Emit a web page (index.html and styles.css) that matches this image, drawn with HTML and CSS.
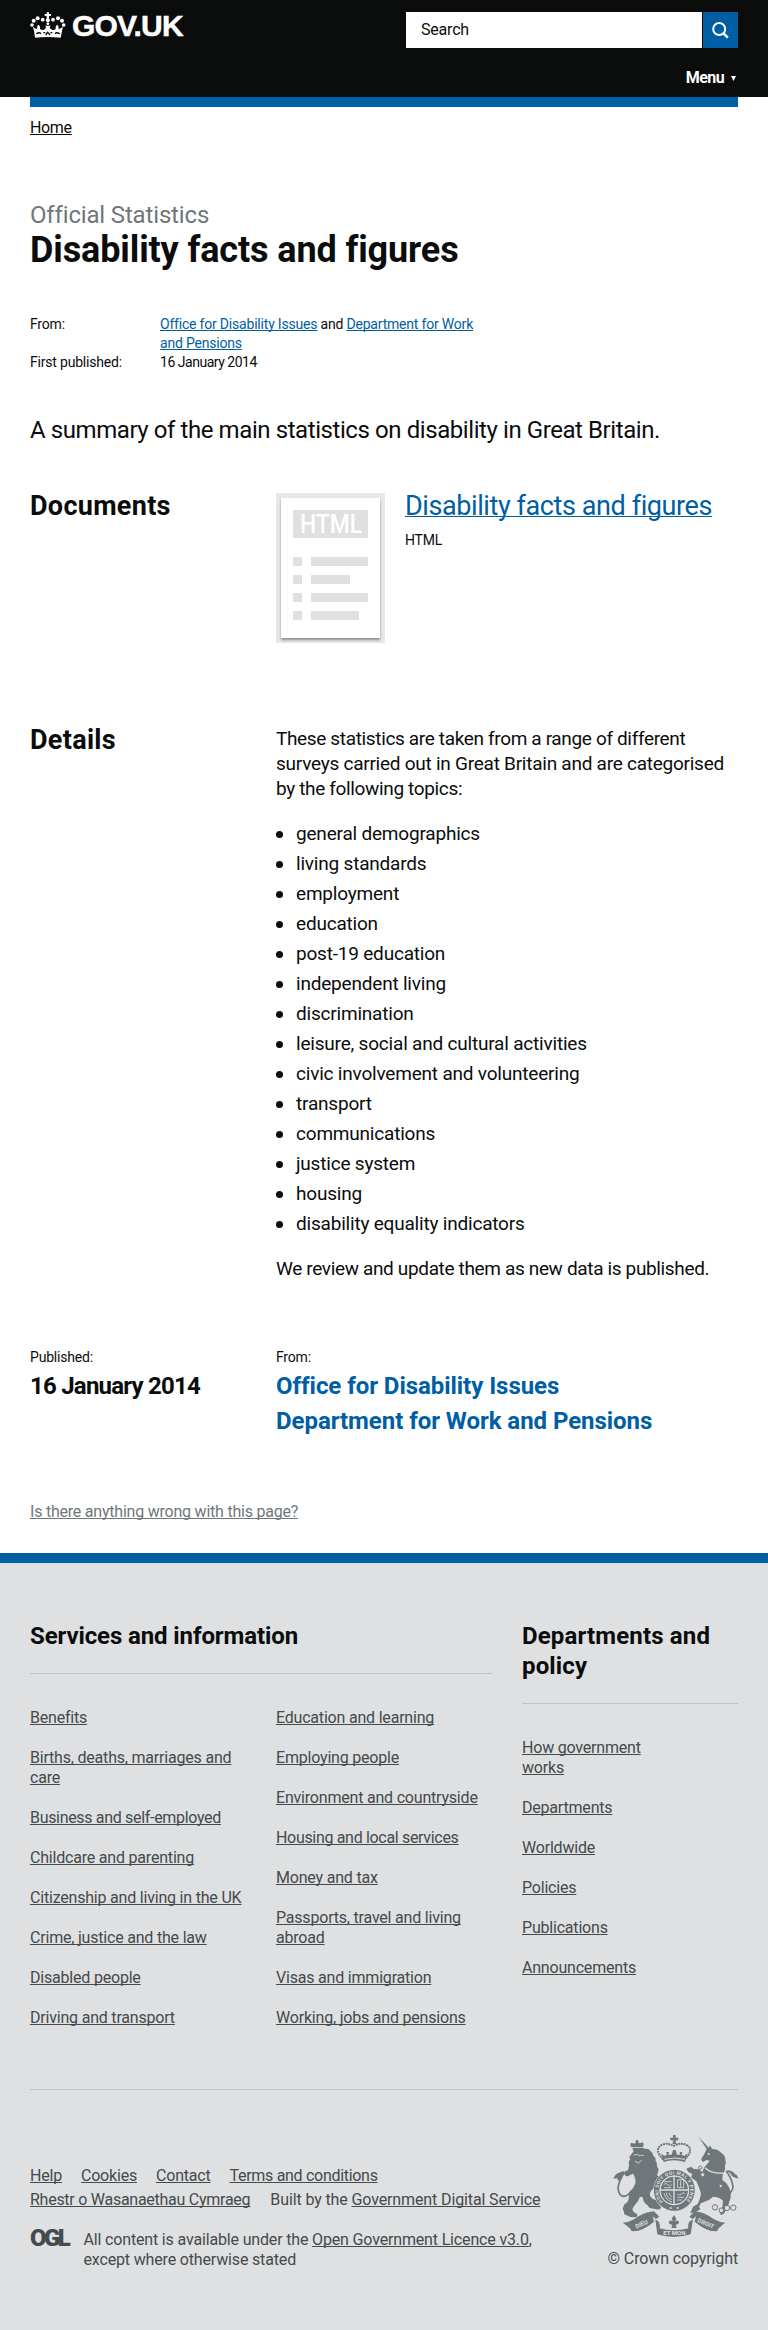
FILE: index.html
```html
<!DOCTYPE html>
<html lang="en">
<head>
<meta charset="utf-8">
<title>Disability facts and figures - GOV.UK</title>
<link rel="stylesheet" href="styles.css">
</head>
<body>
<header class="header">
  <a class="logo" href="#">
    <svg class="crown" viewBox="15 18 108 81" aria-hidden="true">
      <path fill="#fff" d="M27 77 L23 64 Q28 73 37 71 Q34 63 41 59 Q47 64 45 72 Q54 78 60 71 Q66 68 60 62 L77 62 Q71 68 77 71 Q85 78 92 72 Q90 64 96 59 Q103 63 100 71 Q109 73 114 64 L107 98 Q68 94 30 98Z"/>
      <path fill="#fff" d="M65 41h7v-8h6v-6h-6v-5h-7v5h-6v6h6z"/>
      <g fill="#fff"><circle cx="68.500" cy="46" r="6"/><circle cx="53" cy="44" r="5.500"/><circle cx="84" cy="44" r="5.500"/><circle cx="38" cy="40" r="6"/><circle cx="99" cy="40" r="6"/><circle cx="26" cy="47" r="6"/><circle cx="111" cy="47" r="6"/><circle cx="21" cy="60" r="5.500"/><circle cx="116" cy="60" r="5.500"/><circle cx="68.500" cy="56" r="4"/></g>
      <path fill="none" stroke="#0b0c0c" stroke-width="4" d="M34 87q8-7 14-1M90 86q6-6 14 1M55 83h6M76 83h6M62 90l6-8 7 8"/>
    </svg>
    <span class="logo-text">GOV.UK</span>
  </a>
  <div class="header-tools">
    <form class="search">
      <div class="search-box">Search</div>
      <div class="search-button">
        <svg viewBox="0 0 17 17" width="17" height="17" aria-hidden="true"><circle cx="7.200" cy="7" r="6" fill="none" stroke="#fff" stroke-width="2"/><path d="M11.500 11.300l4.300 4.300" stroke="#fff" stroke-width="2.600"/></svg>
      </div>
    </form>
    <a class="menu" href="#">Menu<svg viewBox="0 0 5 5" width="5" height="5" aria-hidden="true"><path fill="#fff" d="M0 0h5L2.500 5z"/></svg></a>
  </div>
</header>
<main class="page">
  <div class="brand-bar"></div>
  <nav class="breadcrumb"><a href="#">Home</a></nav>
  <div class="title">
    <p class="title-context">Official Statistics</p>
    <h1>Disability facts and figures</h1>
  </div>
  <dl class="meta">
    <dt>From:</dt>
    <dd><a href="#">Office for Disability Issues</a> and <a href="#">Department for Work<br>and Pensions</a></dd>
    <dt>First published:</dt>
    <dd class="date">16 January 2014</dd>
  </dl>
  <p class="summary">A summary of the main statistics on disability in Great Britain.</p>
  <section class="row documents">
    <h2>Documents</h2>
    <div class="attachment">
      <svg class="thumb" viewBox="0 0 109 150" width="109" height="150" aria-hidden="true">
        <path fill="#e7e7e7" d="M0 0h109v150H0z"/>
        <g class="sheet"><path fill="#fff" d="M5 5h99v140H5z"/></g>
        <path fill="#dee0e2" d="M17 17h75v28H17zM17 64h9v9h-9zM17 82h9v9h-9zM17 100h9v9h-9zM17 118h9v9h-9zM35 64h57v9H35zM35 82h39v9H35zM35 100h57v9H35zM35 118h48v9H35z"/>
        <text class="thumb-text" x="24" y="40" textLength="62" lengthAdjust="spacingAndGlyphs">HTML</text>
      </svg>
      <div>
        <a class="attachment-title" href="#">Disability facts and figures</a>
        <p class="attachment-type">HTML</p>
      </div>
    </div>
  </section>
  <section class="row details">
    <h2>Details</h2>
    <div class="prose">
      <p class="intro">These statistics are taken from a range of different<br><span class="wide">surveys carried out in Great Britain and are categorised</span><br>by the following topics:</p>
      <ul>
        <li>general demographics</li>
        <li>living standards</li>
        <li>employment</li>
        <li>education</li>
        <li>post-19 education</li>
        <li>independent living</li>
        <li>discrimination</li>
        <li>leisure, social and cultural activities</li>
        <li>civic involvement and volunteering</li>
        <li>transport</li>
        <li>communications</li>
        <li>justice system</li>
        <li>housing</li>
        <li>disability equality indicators</li>
      </ul>
      <p>We review and update them as new data is published.</p>
    </div>
  </section>
  <section class="row published">
    <div>
      <p class="label">Published:</p>
      <p class="value value-date">16 January 2014</p>
    </div>
    <div>
      <p class="label">From:</p>
      <p class="value"><a href="#">Office for Disability Issues</a></p>
      <p class="value"><a href="#">Department for Work and Pensions</a></p>
    </div>
  </section>
  <p class="report"><a href="#">Is there anything wrong with this page?</a></p>
</main>
<footer class="footer">
  <div class="footer-nav">
    <section class="services">
      <h2>Services and information</h2>
      <div class="columns">
        <ul>
          <li><a href="#">Benefits</a></li>
          <li><a href="#">Births, deaths, marriages and<br>care</a></li>
          <li class="tight"><a href="#">Business and self-employed</a></li>
          <li><a href="#">Childcare and parenting</a></li>
          <li><a href="#">Citizenship and living in the UK</a></li>
          <li><a href="#">Crime, justice and the law</a></li>
          <li><a href="#">Disabled people</a></li>
          <li><a href="#">Driving and transport</a></li>
        </ul>
        <ul>
          <li><a href="#">Education and learning</a></li>
          <li><a href="#">Employing people</a></li>
          <li><a href="#">Environment and countryside</a></li>
          <li class="tight"><a href="#">Housing and local services</a></li>
          <li><a href="#">Money and tax</a></li>
          <li><a href="#">Passports, travel and living<br>abroad</a></li>
          <li><a href="#">Visas and immigration</a></li>
          <li><a href="#">Working, jobs and pensions</a></li>
        </ul>
      </div>
    </section>
    <section class="policy">
      <h2>Departments and<br>policy</h2>
      <ul>
        <li><a href="#">How government<br>works</a></li>
        <li><a href="#">Departments</a></li>
        <li><a href="#">Worldwide</a></li>
        <li><a href="#">Policies</a></li>
        <li><a href="#">Publications</a></li>
        <li><a href="#">Announcements</a></li>
      </ul>
    </section>
  </div>
  <div class="footer-meta">
    <div class="footer-left">
      <div class="support"><a href="#">Help</a><a href="#">Cookies</a><a href="#">Contact</a><a class="terms" href="#">Terms and conditions</a></div>
      <div class="support support-second"><a href="#">Rhestr o Wasanaethau Cymraeg</a><span class="built">Built by the <a href="#">Government Digital Service</a></span></div>
      <div class="licence">
        <span class="ogl">OGL</span>
        <p>All content is available under the <a href="#">Open Government Licence v3.0</a>,<br>except where otherwise stated</p>
      </div>
    </div>
    <div class="copyright">
      <svg class="crest" viewBox="24 15 375 306" width="125" height="102" aria-hidden="true">
        <defs><path id="garter" d="M174 215 A48 48 0 1 1 242 215"/></defs>
        <!-- lion -->
        <g fill="#6f777b">
          <path transform="translate(6 0)" d="M80 64l-4-8 4-2h30l4 3q12-2 16 6 8 4 8 13 8 6 8 16 6 8 4 16 6 8 4 16l-4 12 10 6q-10 4-12 12 2 16-10 22-10 8-10 16 2 12 12 16 12 2 18 12l4 14q-4 6-14 4l-20-4q-6-10-12-12-8-10-10-22l-8 2q-4 14-12 20-8 10-10 16l4 8 10 6q4 8-4 10l-16-1-18-8q0-10-5-16l5-14q10-4 13-16l2-20q10-8 18-26 2-12-2-20l-4-10-10 4q-8 6-14 2l-4-8q4-8 12-8 4-14 3-18-3-10 4-14l-3-8z"/>
          <path d="M80 52q-8-10 0-14l8 3q6-3 8-9 3 6 9 8l8-3q6 5 0 15z"/>
          <circle cx="96" cy="34" r="4"/>
          <path d="M25 146q6-16 22-20 14-6 13 2-4 6-10 8 4 12-5 16-10 0-8-8-8 2-12 2z"/>
        </g>
        <path fill="none" stroke="#6f777b" stroke-width="5" d="M57 129q-16 24-18 46 3 24 18 24 14-2 23-18"/>
        <path fill="none" stroke="#dee0e2" stroke-width="2.500" d="M86 76l11-3 8 5M106 76l10 0M90 94l10 5 10-8"/>
        <!-- unicorn -->
        <g fill="#6f777b">
          <path d="M281 21L311 53L315 46L321 57Q340 58 348 68Q360 74 361 88Q364 98 360 108Q362 124 354 130Q351 144 352 150Q366 158 372 172Q380 188 376 206L370 224L358 250L348 256L344 246L352 232L354 212Q342 200 324 200Q314 210 302 214L288 220L282 230L286 238L272 246L256 250L264 230L278 222L284 208L288 192L284 178Q280 166 274 154L258 142L262 132L250 126L244 116L258 110L266 117L282 118L292 126L298 112Q306 104 314 92L304 90L296 95Q288 94 289 86L298 72L305 57Z"/>
          <path d="M396 144q-16-2-18-12-6-6-14-8 2-6 12-2 10 2 14 10 10 4 9 16z"/>
        </g>
        <path fill="none" stroke="#6f777b" stroke-width="5" d="M364 123q18 26 20 48-2 22-26 20"/>
        <path fill="none" stroke="#dee0e2" stroke-width="4" d="M300 113q18 18 54 16"/>
        <circle cx="311" cy="72" r="3" fill="#dee0e2"/>
        <g fill="#dee0e2" stroke="#6f777b" stroke-width="3"><circle cx="293" cy="134" r="6"/><circle cx="286" cy="113" r="5"/><circle cx="347" cy="168" r="5"/><circle cx="330" cy="232" r="8"/><circle cx="349" cy="241" r="7"/><circle cx="366" cy="234" r="8"/><circle cx="385" cy="233" r="8"/></g>
        <!-- crown -->
        <path fill="none" stroke="#6f777b" stroke-width="6" stroke-dasharray="6 2" d="M174 88q-27-28-6-42 18-10 38 2 20-12 40-2 22 14-7 42"/>
        <path fill="#6f777b" d="M168 70l10 8 8-4-2-8h8l-2 8 10 0 4-14h8l4 14 10 0-2-8h8l-2 8 8 4 10-8-8 26q-36-10-64 0zM202 42l4-10-10-2v-7h8v-9h8v9h8v7l-9 2 3 10z"/>
        <path fill="none" stroke="#dee0e2" stroke-width="3" d="M178 88q32-8 62 0"/>
        <!-- garter and shield -->
        <circle cx="208" cy="181" r="63" fill="#dee0e2"/>
        <circle cx="208" cy="181" r="53" fill="none" stroke="#6f777b" stroke-width="17"/>
        <circle cx="208" cy="181" r="42" fill="#6f777b"/>
        <text class="garter-text"><textPath href="#garter">HONI SOIT QUI MAL Y PENSE</textPath></text>
        <circle cx="208" cy="181" r="43" fill="none" stroke="#dee0e2" stroke-width="3"/>
        <path fill="none" stroke="#dee0e2" stroke-width="4" d="M207 138v86M165 180h86"/>
        <path fill="none" stroke="#dee0e2" stroke-width="2.500" d="M177 155h23M176 164q6-7 12 0t12 0M177 173h22M218 173v-24h18v24zM227 151v20M177 190q6 22 24 26M184 188q2 18 17 20M192 188q2 10 9 12M217 192q6 7 12 0t12 0M217 202h20M217 210h14"/>
        <circle cx="197" cy="234" r="3" fill="#dee0e2"/><circle cx="218" cy="234" r="3" fill="#dee0e2"/>
        <!-- fleur and motto ribbons -->
        <path fill="#6f777b" d="M207 255l7 11-4 9q9-8 12 1-1 8-10 8l3 10h-16l3-10q-10 0-11-8 4-9 13-1l-4-9z"/>
        <path fill="#6f777b" d="M53 278q18 0 34-10 30-22 60-24l16 16-10 7-10-8 4 16q-38 32-68 28 0-8-26-25zM361 278q-16 0-34-10-30-22-58-24l-16 16 10 7 10-8-4 16q38 32 68 28 0-8 24-25z"/>
        <path fill="#6f777b" d="M151 268l11 8q5 17 1 19 44 12 88 0-4-4 1-19l12-8-7 45q-52 16-100 0z"/>
        <g class="motto"><text x="112" y="288" transform="rotate(-24 112 288)">DIEU</text><text x="208" y="316">ET MON</text><text x="300" y="286" transform="rotate(24 300 286)">DROIT</text></g>
      </svg>
      <a href="#">© Crown copyright</a>
    </div>
  </div>
</footer>
</body>
</html>
```
FILE: styles.css
```css
* { box-sizing: border-box; }
body { margin: 0; background: #fff; color: #0b0c0c; font: 16px/20px Roboto, "Liberation Sans", sans-serif; letter-spacing: -0.2px; }
h1, h2, p, ul, dl, dd { margin: 0; padding: 0; }
ul { list-style: none; }
a { color: #005ea5; text-decoration: underline; text-decoration-thickness: 1px; text-underline-offset: 1px; text-decoration-skip-ink: none; }

.header { display: flex; justify-content: space-between; height: 97px; padding: 11px 30px 0; background: #0b0c0c; }
.logo { display: flex; align-items: flex-start; gap: 6px; height: 30px; color: #fff; text-decoration: none; }
.crown { width: 36px; height: 27px; }
.logo-text { font: bold 30px/30px "Liberation Sans", sans-serif; letter-spacing: -0.8px; -webkit-text-stroke: 0.5px #fff; }
.header-tools { display: flex; flex-direction: column; align-items: flex-end; width: 332px; padding-top: 1px; }
.search { display: flex; gap: 1px; width: 100%; height: 36px; }
.search-box { flex: 1; padding: 8px 15px; background: #fff; }
.search-button { display: flex; align-items: center; justify-content: center; width: 35px; background: #005ea5; }
.menu { display: flex; align-items: center; gap: 7px; margin-top: 20px; padding-right: 2px; color: #fff; font-weight: 700; letter-spacing: -0.6px; text-decoration: none; }

.page { width: 708px; margin: 0 auto; height: 1456px; }
.brand-bar { height: 10px; background: #005ea5; }
.breadcrumb { margin-top: 11px; letter-spacing: -0.35px; }
.breadcrumb a { color: #0b0c0c; }
.title { margin-top: 62px; }
.title-context { color: #6f777b; font-size: 24px; line-height: 30px; letter-spacing: -0.16px; }
h1 { font-size: 36px; line-height: 40px; font-weight: 700; letter-spacing: -0.12px; }
.meta { display: grid; grid-template-columns: 130px 1fr; margin-top: 45px; font-size: 14px; line-height: 19px; letter-spacing: -0.2px; }
.meta .date { letter-spacing: -0.48px; }
.summary { margin-top: 43px; font-size: 24px; line-height: 30px; letter-spacing: -0.42px; }
.row { display: grid; grid-template-columns: 216px 462px; column-gap: 30px; }
.row h2 { font-size: 27px; line-height: 30px; font-weight: 700; letter-spacing: 0.3px; }
.documents { margin-top: 46px; }
.attachment { display: flex; gap: 20px; }
.thumb { margin-top: 2px; }
.sheet { filter: drop-shadow(0 2px 1px rgba(11, 12, 12, 0.4)); }
.thumb-text { fill: #fff; font-size: 25px; font-weight: 500; letter-spacing: 0; }
.attachment-title { display: block; font-size: 27px; line-height: 30px; letter-spacing: -0.41px; }
.attachment-type { margin-top: 9px; font-size: 14px; }
.details { margin-top: 82px; }
.prose { padding-top: 1px; font-size: 19px; line-height: 25px; letter-spacing: -0.35px; }
.prose .wide { letter-spacing: -0.25px; }
.prose ul { margin: 18px 0 17px; }
.prose li { display: flex; align-items: center; gap: 13px; line-height: 30px; letter-spacing: -0.2px; }
.prose li::before { content: ""; width: 7px; height: 7px; border-radius: 50%; background: #0b0c0c; }
.published { margin-top: 66px; }
.label { margin-bottom: 4px; font-size: 14px; }
.value { margin-bottom: 5px; font-size: 24px; line-height: 30px; font-weight: 700; letter-spacing: -0.05px; }
.value a { text-decoration: none; }
.value-date { letter-spacing: -0.77px; }
.report { margin-top: 61px; letter-spacing: -0.22px; }
.report a { color: #6f777b; }

.footer { height: 777px; padding: 58px 30px 0; border-top: 10px solid #005ea5; background: #dee0e2; color: #454a4c; }
.footer a { color: #454a4c; }
.footer-nav { display: grid; grid-template-columns: 462px 216px; column-gap: 30px; padding-bottom: 61px; border-bottom: 1px solid #bfc1c3; }
.footer h2 { padding-bottom: 22px; border-bottom: 1px solid #bfc1c3; color: #0b0c0c; font-size: 24px; line-height: 30px; font-weight: 700; letter-spacing: -0.11px; }
.footer .policy h2 { letter-spacing: 0.15px; }
.columns { display: grid; grid-template-columns: 216px 216px; column-gap: 30px; }
.footer ul { display: flex; flex-direction: column; gap: 20px; padding-top: 34px; }
.tight { letter-spacing: -0.32px; }
.footer-meta { display: flex; justify-content: space-between; padding-top: 45px; }
.footer-left { padding-top: 29px; }
.support { display: flex; gap: 19px; line-height: 24px; }
.support .terms { letter-spacing: -0.3px; }
.support-second { gap: 20px; letter-spacing: -0.26px; }
.built { letter-spacing: -0.12px; }
.licence { display: flex; margin-top: 18px; letter-spacing: -0.16px; }
.ogl { width: 53.500px; font-size: 24px; line-height: 16px; font-weight: 900; letter-spacing: -2.6px; }
.copyright { display: flex; flex-direction: column; align-items: flex-end; gap: 12px; letter-spacing: -0.12px; }
.copyright a { text-decoration: none; }
.motto text { fill: #dee0e2; font-size: 18px; font-weight: 700; letter-spacing: 0; text-anchor: middle; }
.garter-text { fill: #dee0e2; font-size: 14px; font-weight: 700; letter-spacing: 1.500px; }
```
